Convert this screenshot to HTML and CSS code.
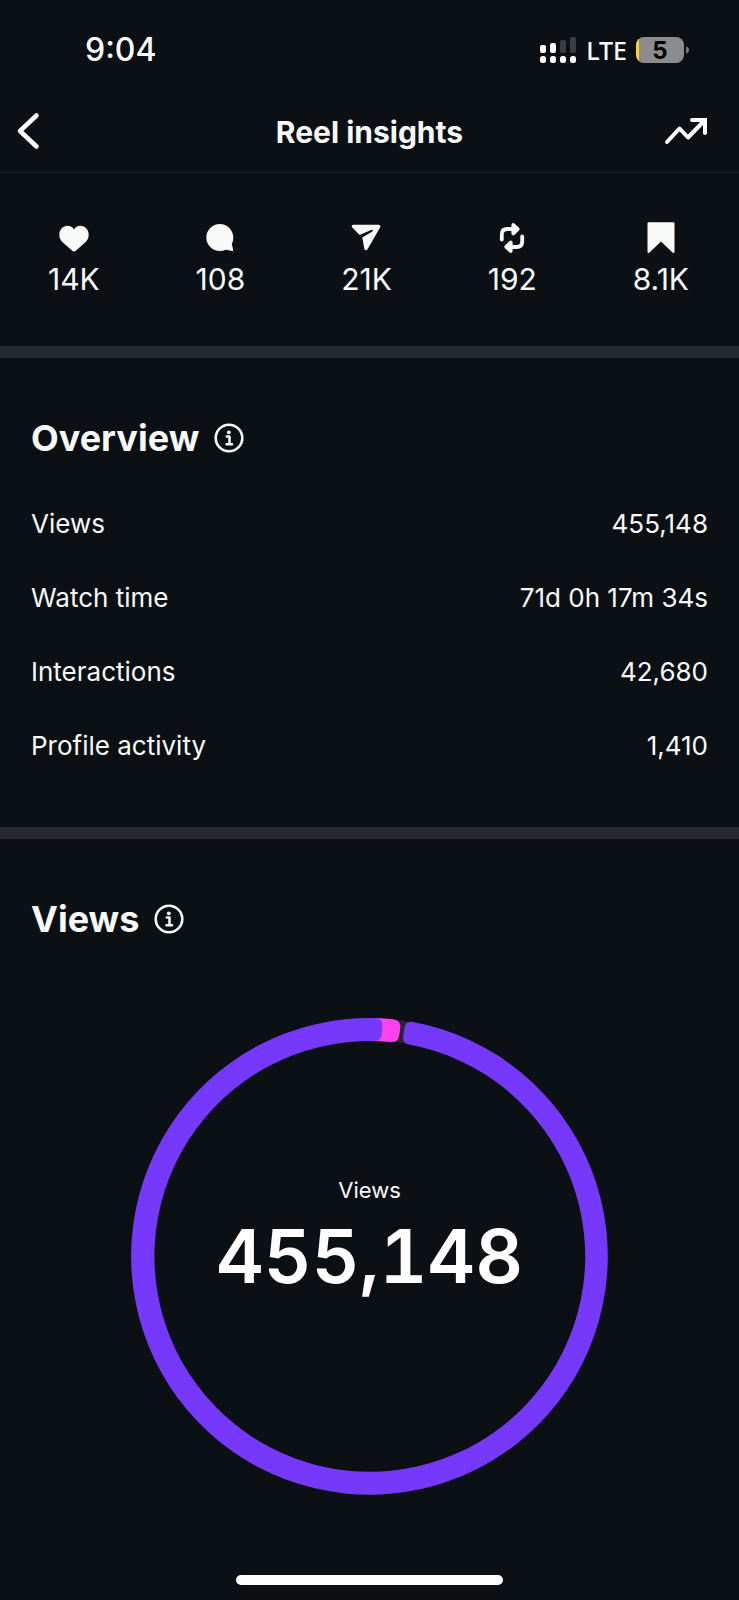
FILE: index.html
```html
<!DOCTYPE html>
<html lang="en">
<head>
    <meta charset="UTF-8">
    <meta name="viewport" content="width=device-width, initial-scale=1">
    <title>Reel insights</title>
    <link rel="stylesheet" href="styles.css">
</head>
<body>

    <!-- status bar -->
    <div class="status-bar">
        <span class="time">9:04</span>
        <div class="status-icons">
            <svg class="signal" width="38" height="28" viewBox="0 0 38 28">
                <g fill="#fff">
                    <rect x="1" y="9" width="6" height="8" rx="2"/>
                    <rect x="11" y="7" width="6" height="10" rx="2"/>
                    <rect x="1" y="20" width="6" height="7" rx="2.500"/>
                    <rect x="11" y="20" width="6" height="7" rx="2.500"/>
                    <rect x="21" y="20" width="6" height="7" rx="2.500"/>
                    <rect x="31" y="20" width="6" height="7" rx="2.500"/>
                </g>
                <g fill="#3a3d40">
                    <rect x="21" y="4" width="6" height="13" rx="2"/>
                    <rect x="31" y="1" width="6" height="16" rx="2"/>
                </g>
            </svg>
            <span class="network">LTE</span>
            <div class="battery">
                <span class="battery-level">5</span>
                <svg width="5" height="8" viewBox="0 0 5 8"><path d="M2 0.5c2 .6 3 1.700 3 3.500s-1 2.900-3 3.500z" fill="#77797b"/></svg>
            </div>
        </div>
    </div>

    <!-- header -->
    <header class="header">
        <button class="icon-btn back-btn" aria-label="Back">
            <svg width="28" height="40" viewBox="0 0 28 40" fill="none" stroke="#fff" stroke-width="4.500" stroke-linecap="round" stroke-linejoin="round">
                <path d="M22.500 3.500L6 19l16.500 15.500"/>
            </svg>
        </button>
        <h1>Reel insights</h1>
        <button class="icon-btn boost-btn" aria-label="Boost">
            <svg width="44" height="32" viewBox="0 0 44 32" fill="none" stroke="#fff" stroke-width="4" stroke-linecap="round" stroke-linejoin="round">
                <path d="M3 26L15.500 12.500l8.500 9L40 5"/>
                <path d="M28 4h13v13" stroke-linejoin="miter"/>
            </svg>
        </button>
    </header>

    <!-- counters -->
    <ul class="stats">
        <li>
            <svg width="38" height="38" viewBox="0 0 38 38" fill="#f8fafa">
                <path d="M19 32.500c-.7 0-1.200-.3-1.800-.8L7.600 23.200C5.600 21.200 4.300 18.800 4.300 15.700c0-5 3.700-8.900 8.200-8.900 2.800 0 5.100 1.300 6.500 3.600 1.400-2.300 3.700-3.600 6.500-3.600 4.500 0 8.200 3.900 8.200 8.900 0 3.100-1.300 5.500-3.300 7.500l-9.600 8.500c-.6.5-1.100.8-1.800.8z"/>
            </svg>
            <span>14K</span>
        </li>
        <li>
            <svg width="38" height="38" viewBox="0 0 38 38" fill="#f8fafa">
                <path d="M18.800 5C11.400 5 5.300 11 5.300 18.500S11.400 32 18.800 32c2 0 4-.4 6-1.300l6.400 1.400c.7.100 1.200-.4 1-1.100L30.800 25c1-2 1.500-4.200 1.500-6.500C32.300 11 26.200 5 18.800 5z"/>
            </svg>
            <span>108</span>
        </li>
        <li>
            <svg width="38" height="38" viewBox="0 0 38 38" fill="#f8fafa">
                <path d="M6.500 5.800h25c1.600 0 2.400 1.500 1.600 2.800L20.500 30.300c-.9 1.500-2.900 1.200-3.200-.5L15.300 18.600 25 12.800c1.500-.9.600-2.600-1-1.900L12.600 15.900 5.300 8.600c-1.200-1.200-.5-2.800 1.200-2.800z"/>
            </svg>
            <span>21K</span>
        </li>
        <li>
            <svg width="38" height="38" viewBox="0 0 38 38" fill="none" stroke="#f8fafa" stroke-width="3.800" stroke-linecap="round" stroke-linejoin="round">
                <path d="M8.800 20.500v-5c0-3.400 1.800-5.500 5.500-5.500H23"/>
                <path d="M20.300 6l4.400 4.200-4.400 4.300z" fill="#f8fafa"/>
                <path d="M29.200 17.500v5c0 3.400-1.800 5.500-5.500 5.500H15"/>
                <path d="M17.700 32l-4.400-4.200 4.400-4.300z" fill="#f8fafa"/>
            </svg>
            <span>192</span>
        </li>
        <li>
            <svg width="38" height="38" viewBox="0 0 38 38" fill="#f8fafa">
                <path d="M6.800 3.300h24.400c.8 0 1.300.5 1.300 1.300v28.200c0 1.200-1.200 1.600-2 .8L19 22.600 7.500 33.600c-.8.8-2 .4-2-.8V4.600c0-.8.5-1.300 1.300-1.300z"/>
            </svg>
            <span>8.1K</span>
        </li>
    </ul>

    <section class="section">
        <div class="section-title">
            <h2>Overview</h2>
            <button class="icon-btn" aria-label="About overview">
                <svg width="30" height="30" viewBox="0 0 30 30" fill="none" stroke="#f8fafa">
                    <circle cx="15" cy="15" r="13.300" stroke-width="2.600"/>
                    <circle cx="14.800" cy="9.300" r="1.900" fill="#f8fafa" stroke="none"/>
                    <path d="M12.800 13.600h2.700V21M12.500 21.200h5.500" stroke-width="2.500" stroke-linecap="round" stroke-linejoin="round"/>
                </svg>
            </button>
        </div>
        <dl class="rows">
            <div class="row">
                <dt>Views</dt>
                <dd>455,148</dd>
            </div>
            <div class="row">
                <dt>Watch time</dt>
                <dd>71d 0h 17m 34s</dd>
            </div>
            <div class="row">
                <dt>Interactions</dt>
                <dd>42,680</dd>
            </div>
            <div class="row">
                <dt>Profile activity</dt>
                <dd>1,410</dd>
            </div>
        </dl>
    </section>

    <section class="section">
        <div class="section-title">
            <h2>Views</h2>
            <button class="icon-btn" aria-label="About views">
                <svg width="30" height="30" viewBox="0 0 30 30" fill="none" stroke="#f8fafa">
                    <circle cx="15" cy="15" r="13.300" stroke-width="2.600"/>
                    <circle cx="14.800" cy="9.300" r="1.900" fill="#f8fafa" stroke="none"/>
                    <path d="M12.800 13.600h2.700V21M12.500 21.200h5.500" stroke-width="2.500" stroke-linecap="round" stroke-linejoin="round"/>
                </svg>
            </button>
        </div>
        <div class="chart">
            <svg class="ring" viewBox="-241 -241 482 482">
                <!-- track -->
                <circle r="227.500" fill="none" stroke="#26292e" stroke-width="22"/>
                <!-- non-followers / followers -->
                <path fill="#ff42ec" d="M0-239A239 239 0 0 1 24-237.800Q32-236.800 31-229L29.900-221.500Q28.900-214.100 21.500-214.900A216 216 0 0 0 0-216z"/>
                <path fill="#7638fa" d="M44-234.900A239 239 0 1 1 5.500-238.900Q13.300-238.600 13-231L12.500-223.200Q12.100-215.700 4.800-215.900A216 216 0 1 0 40-212.300Q32.900-213.500 34-221L35.200-228.800Q36.300-236.300 44-234.900z"/>
            </svg>
            <div class="chart-text">
                <span class="chart-label">Views</span>
                <strong class="chart-value">455,148</strong>
            </div>
        </div>
    </section>

    <div class="home-bar"></div>

</body>
</html>
```
FILE: styles.css
```css
* {
    box-sizing: border-box;
    margin: 0;
    padding: 0;
}

body {
    display: flex;
    flex-direction: column;
    min-height: 100vh;
    background-color: #0b1014;
    color: #f8fafa;
    font-family: Inter, "Liberation Sans", sans-serif;
    font-size: 26px;
}

svg {
    display: block;
}

.icon-btn {
    background: none;
    border: none;
    cursor: pointer;
}

/* status bar */
.status-bar {
    display: flex;
    justify-content: space-between;
    align-items: center;
    height: 92px;
    padding: 7px 50px 0 85px;
    color: #fff;
}

.time {
    font-size: 32px;
    font-weight: 500;
}

.status-icons {
    display: flex;
    align-items: center;
    gap: 9px;
}

.network {
    font-family: "Noto Sans", sans-serif;
    font-size: 25px;
    font-weight: 500;
    line-height: 28px;
}

.battery {
    display: flex;
    align-items: center;
}

.battery-level {
    width: 48px;
    height: 26px;
    border-radius: 8px;
    background: linear-gradient(to right, #fdd426 3px, #8a8c8e 3px);
    color: #000;
    font-size: 24px;
    font-weight: 700;
    line-height: 28px;
    text-align: center;
}

/* header */
.header {
    display: grid;
    grid-template-columns: 1fr auto 1fr;
    align-items: center;
    height: 81px;
    border-bottom: 1px solid #1c2125;
}

.back-btn {
    justify-self: start;
    padding-left: 14px;
}

.boost-btn {
    justify-self: end;
    padding-right: 31px;
}

h1 {
    font-size: 30px;
    font-weight: 700;
    line-height: 40px;
}

/* counters */
.stats {
    display: flex;
    justify-content: space-around;
    padding: 46px 2px 47px 0;
    list-style: none;
}

.stats li {
    display: flex;
    flex-direction: column;
    align-items: center;
    gap: 2px;
    font-size: 30px;
    line-height: 40px;
}

/* sections */
.section {
    padding: 58px 31px 44px;
    border-top: 12px solid #25292d;
}

.section-title {
    display: flex;
    align-items: center;
    gap: 15px;
}

h2 {
    font-size: 36px;
    font-weight: 700;
    line-height: 44px;
}

.rows {
    margin-top: 27px;
}

.row {
    display: flex;
    justify-content: space-between;
    line-height: 74px;
}

/* chart */
.chart {
    display: grid;
    place-items: center;
    margin-top: 75px;
}

.ring,
.chart-text {
    grid-area: 1 / 1;
}

.ring {
    width: 71%;
}

.chart-text {
    display: flex;
    flex-direction: column;
    align-items: center;
    gap: 6px;
    padding-bottom: 38px;
}

.chart-label {
    font-size: 22px;
    line-height: 32px;
}

.chart-value {
    color: #fff;
    font-size: 74px;
    font-weight: 600;
    font-variant-numeric: tabular-nums;
    line-height: 88px;
}

.home-bar {
    width: 36%;
    height: 10px;
    margin: auto auto 15px;
    border-radius: 5px;
    background-color: #fff;
}
```
